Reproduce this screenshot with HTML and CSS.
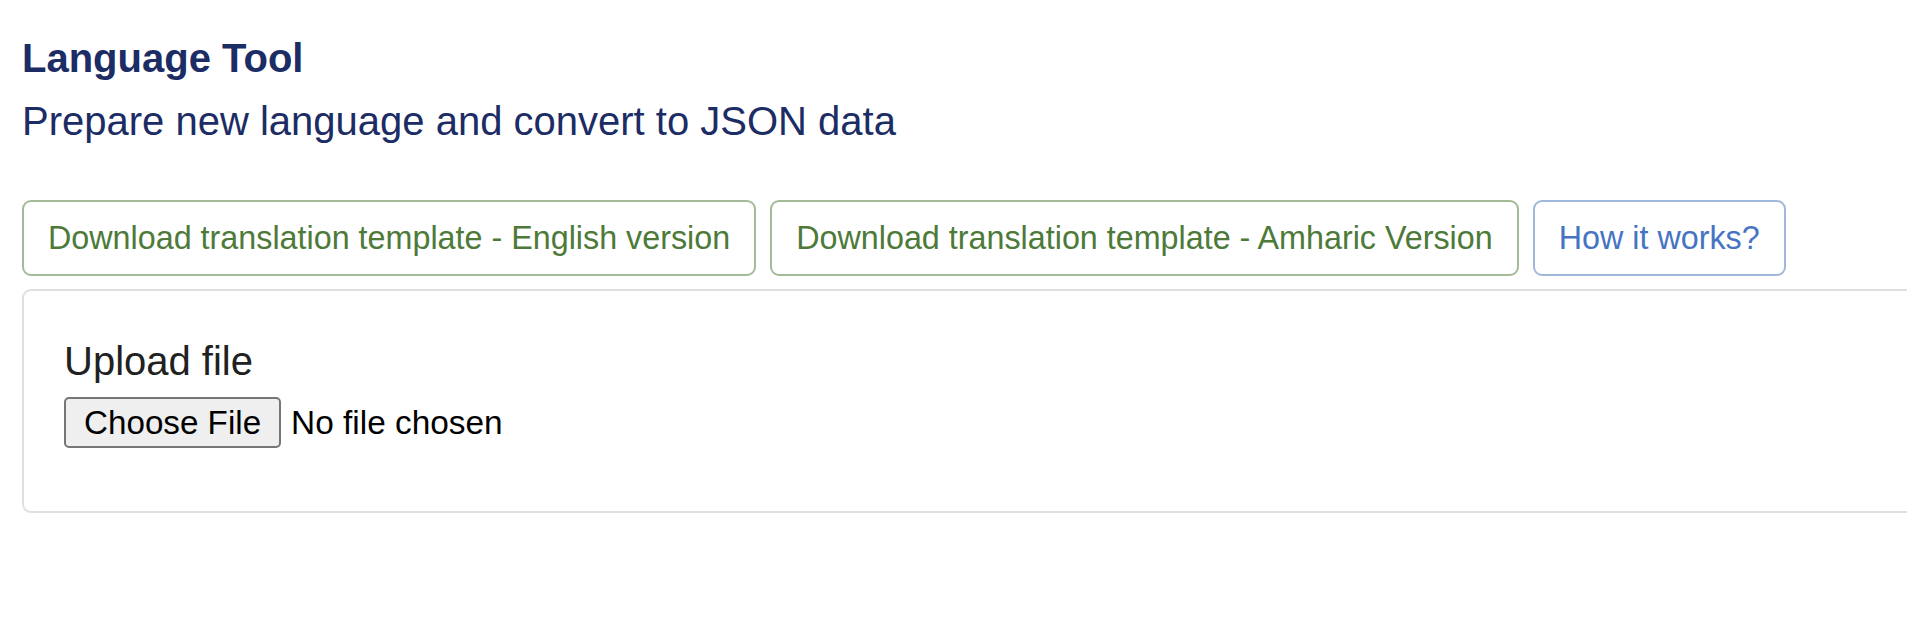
FILE: index.html
```html
<!DOCTYPE html>
<html lang="en">
<head>
<meta charset="utf-8">
<title>Language Tool</title>
<link rel="stylesheet" href="styles.css">
</head>
<body>
<main class="page">
  <h1 class="title">Language Tool</h1>
  <p class="subtitle">Prepare new language and convert to JSON data</p>
  <div class="actions">
    <a class="btn btn-green" href="#">Download translation template - English version</a>
    <a class="btn btn-green" href="#">Download translation template - Amharic Version</a>
    <a class="btn btn-blue" href="#">How it works?</a>
  </div>
  <section class="card">
    <div class="card-body">
      <label class="upload-label">Upload file</label>
      <div class="file-row">
        <span class="file-btn">Choose File</span>
        <span class="file-name">No file chosen</span>
      </div>
    </div>
  </section>
</main>
</body>
</html>
```

FILE: styles.css
```css
html, body {
  margin: 0;
  padding: 0;
  background: #ffffff;
  overflow: hidden;
}

body {
  font-family: "Liberation Sans", Arial, sans-serif;
  color: #212529;
}

.page {
  padding: 34px 0 0 22px;
}

.title {
  margin: 0;
  font-size: 40px;
  font-weight: 700;
  line-height: 48px;
  color: #1c2c64;
}

.subtitle {
  margin: 9px 0 0;
  font-size: 40px;
  line-height: 60px;
  color: #1c2c64;
}

.actions {
  display: flex;
  gap: 14px;
  margin-top: 49px;
}

.btn {
  display: inline-block;
  padding: 12px 24px;
  font-size: 32.3px;
  line-height: 48px;
  border: 2px solid;
  border-radius: 9px;
  text-decoration: none;
  white-space: nowrap;
  background: #ffffff;
}

.btn-green {
  color: #4d7a39;
  border-color: #a4ba98;
}

.btn-blue {
  color: #4674c3;
  border-color: #9fb8dc;
}

.card {
  margin-top: 13px;
  width: 2000px;
  height: 224px;
  border: 2px solid #dfdfdf;
  border-radius: 9px;
  box-sizing: border-box;
}

.card-body {
  padding: 40px 40px;
}

.upload-label {
  display: block;
  font-size: 40px;
  line-height: 60px;
  color: #212121;
  margin-bottom: 6px;
}

.file-row {
  display: flex;
  align-items: center;
  gap: 10px;
}

.file-btn {
  display: inline-block;
  box-sizing: border-box;
  height: 51px;
  padding: 0 18px;
  font-size: 33.2px;
  line-height: 47px;
  color: #000;
  background: #efefef;
  border: 2px solid #767676;
  border-radius: 5px;
}

.file-name {
  font-size: 33.4px;
  color: #000;
}
```
